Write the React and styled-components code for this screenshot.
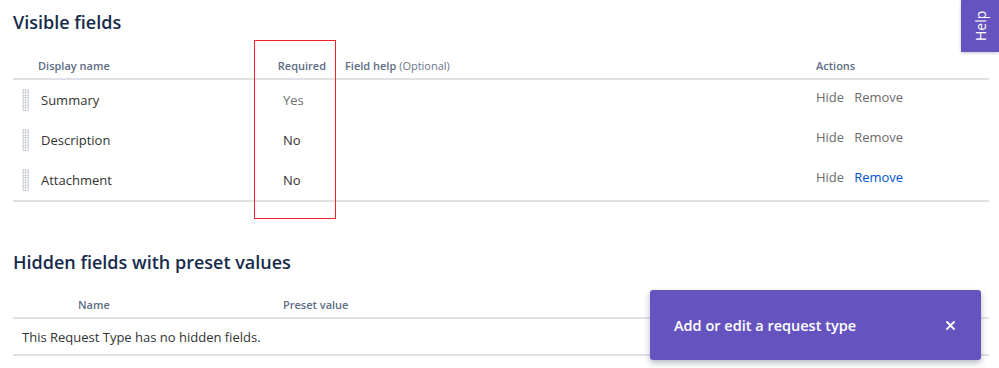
import React from "react"
import styled, { createGlobalStyle } from "styled-components"

const GlobalStyle = createGlobalStyle`
  html, body {
    margin: 0;
    padding: 0;
    background: #fff;
    font-family: "Open Sans", "Noto Sans", sans-serif;
    color: #172b4d;
  }
`

const visibleFields = [
  { name: "Summary", required: "Yes", muted: true },
  { name: "Description", required: "No" },
  { name: "Attachment", required: "No", activeRemove: true },
]

const App = () => {
  return (
    <Page>
      <GlobalStyle />
      <Section>
        <Heading>Visible fields</Heading>
        <FieldTable>
          <HeadRow>
            <HeadCell $pad={25}>Display name</HeadCell>
            <HeadCell $align="right">Required</HeadCell>
            <HeadCell $pad={19}>
              Field help <Optional>(Optional)</Optional>
            </HeadCell>
            <HeadCell>Actions</HeadCell>
          </HeadRow>
          {visibleFields.map((f) => (
            <FieldRow key={f.name}>
              <NameCell>
                <DragHandle />
                {f.name}
              </NameCell>
              <RequiredCell $muted={f.muted}>{f.required}</RequiredCell>
              <div />
              <Actions>
                <ActionLink>Hide</ActionLink>
                <ActionLink $active={f.activeRemove}>Remove</ActionLink>
              </Actions>
            </FieldRow>
          ))}
        </FieldTable>
        <Annotation />
      </Section>

      <Section>
        <Heading $second>Hidden fields with preset values</Heading>
        <HiddenTable>
          <HiddenHead>
            <HeadCell $pad={65}>Name</HeadCell>
            <HeadCell $pad={0}>Preset value</HeadCell>
          </HiddenHead>
          <EmptyRow>This Request Type has no hidden fields.</EmptyRow>
        </HiddenTable>
      </Section>

      <HelpTab>Help</HelpTab>

      <Toast>
        <span>Add or edit a request type</span>
        <CloseButton aria-label="close">
          <svg width="9" height="9" viewBox="0 0 9 9">
            <path d="M1 1L8 8M8 1L1 8" stroke="#fff" strokeWidth="1.8" strokeLinecap="round" />
          </svg>
        </CloseButton>
      </Toast>
    </Page>
  )
}

const Page = styled.div`
  position: relative;
  width: 999px;
  height: 368px;
  overflow: hidden;
  padding: 0 10px 0 13px;
  box-sizing: border-box;
`

const Section = styled.section`
  position: relative;
`

const Heading = styled.h2`
  margin: 0;
  padding-top: ${(p) => (p.$second ? "48px" : "10px")};
  font-size: 18px;
  line-height: 24px;
  font-weight: 600;
  color: #172b4d;
`

const FieldTable = styled.div`
  margin-top: 18px;
  border-bottom: 2px solid #dfe1e6;
`

const columns = "237px 76px 490px 1fr"

const HeadRow = styled.div`
  display: grid;
  grid-template-columns: ${columns};
  align-items: center;
  height: 26px;
  border-bottom: 2px solid #dfe1e6;
`

const HeadCell = styled.div`
  font-size: 11px;
  font-weight: 600;
  color: #5e6c84;
  padding-left: ${(p) => (p.$pad ? p.$pad : 0)}px;
  text-align: ${(p) => p.$align || "left"};
  white-space: nowrap;
`

const Optional = styled.span`
  font-weight: 400;
  color: #6b778c;
`

const FieldRow = styled.div`
  display: grid;
  grid-template-columns: ${columns};
  align-items: center;
  height: 40px;
  font-size: 13px;
  color: #333;
`

const NameCell = styled.div`
  display: flex;
  align-items: center;
  padding-left: 9px;
  gap: 12px;
`

const DragHandle = styled.span`
  width: 7px;
  height: 22px;
  background-image: radial-gradient(circle, #c1c7d0 0.8px, transparent 1px);
  background-size: 2.5px 2.5px;
`

const RequiredCell = styled.div`
  padding-left: 33px;
  color: ${(p) => (p.$muted ? "#707070" : "#333")};
`

const Actions = styled.div`
  display: flex;
  gap: 10px;
  margin-top: -6px;
`

const ActionLink = styled.span`
  color: ${(p) => (p.$active ? "#0052cc" : "#6b6b6b")};
  cursor: pointer;
`

const Annotation = styled.div`
  position: absolute;
  left: 241px;
  top: 40px;
  width: 80px;
  height: 177px;
  border: 1.5px solid #f0222a;
  pointer-events: none;
`

const HiddenTable = styled.div`
  margin-top: 17px;
  border-bottom: 2px solid #dfe1e6;
`

const HiddenHead = styled.div`
  display: grid;
  grid-template-columns: 270px 1fr;
  align-items: center;
  height: 26px;
  border-bottom: 2px solid #dfe1e6;
`

const EmptyRow = styled.div`
  height: 35px;
  display: flex;
  align-items: center;
  padding-left: 9px;
  font-size: 13px;
  color: #333;
`

const HelpTab = styled.div`
  position: absolute;
  top: 0;
  right: 0;
  width: 38px;
  height: 52px;
  background: #6554c0;
  color: #fff;
  font-size: 14px;
  display: flex;
  align-items: center;
  justify-content: center;
  writing-mode: vertical-rl;
  transform: rotate(180deg);
  box-shadow: 0 -1px 3px rgba(9, 30, 66, 0.25);
`

const Toast = styled.div`
  position: absolute;
  left: 650px;
  top: 290px;
  width: 331px;
  height: 70px;
  box-sizing: border-box;
  padding: 0 23px 0 24px;
  background: #6554c0;
  border-radius: 3px;
  box-shadow: 0 3px 6px rgba(9, 30, 66, 0.3);
  color: #fff;
  font-size: 14.5px;
  font-weight: 600;
  display: flex;
  align-items: center;
  justify-content: space-between;
`

const CloseButton = styled.button`
  background: none;
  border: none;
  padding: 0;
  display: flex;
  margin-right: 3px;
`

export default App
